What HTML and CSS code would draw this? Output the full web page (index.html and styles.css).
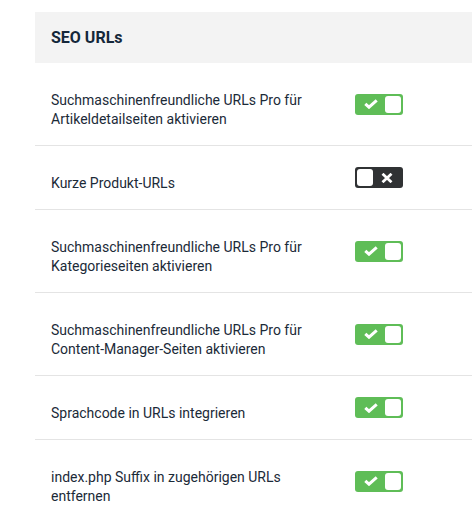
FILE: index.html
```html
<!DOCTYPE html>
<html lang="de">
<head>
<meta charset="utf-8">
<title>SEO URLs</title>
<link rel="stylesheet" href="styles.css">
</head>
<body>
<section class="panel">
  <header class="panel-head">SEO URLs</header>
  <div class="row">
    <div class="label">Suchmaschinenfreundliche URLs Pro für<br>Artikeldetailseiten aktivieren</div>
    <span class="toggle on"><svg class="ico" width="14" height="10" viewBox="0 0 14 10"><path d="M1.3 4.8 L5 8.2 L12.7 1.4" fill="none" stroke="#fff" stroke-width="3"/></svg><span class="knob"></span></span>
  </div>
  <div class="row">
    <div class="label">Kurze Produkt-URLs</div>
    <span class="toggle off"><span class="knob"></span><svg class="ico" width="12" height="10" viewBox="0 0 12 10"><path d="M1.5 0.8 L10.5 9.2 M10.5 0.8 L1.5 9.2" fill="none" stroke="#fff" stroke-width="2.8"/></svg></span>
  </div>
  <div class="row">
    <div class="label">Suchmaschinenfreundliche URLs Pro für<br>Kategorieseiten aktivieren</div>
    <span class="toggle on"><svg class="ico" width="14" height="10" viewBox="0 0 14 10"><path d="M1.3 4.8 L5 8.2 L12.7 1.4" fill="none" stroke="#fff" stroke-width="3"/></svg><span class="knob"></span></span>
  </div>
  <div class="row">
    <div class="label">Suchmaschinenfreundliche URLs Pro für<br>Content-Manager-Seiten aktivieren</div>
    <span class="toggle on"><svg class="ico" width="14" height="10" viewBox="0 0 14 10"><path d="M1.3 4.8 L5 8.2 L12.7 1.4" fill="none" stroke="#fff" stroke-width="3"/></svg><span class="knob"></span></span>
  </div>
  <div class="row">
    <div class="label">Sprachcode in URLs integrieren</div>
    <span class="toggle on"><svg class="ico" width="14" height="10" viewBox="0 0 14 10"><path d="M1.3 4.8 L5 8.2 L12.7 1.4" fill="none" stroke="#fff" stroke-width="3"/></svg><span class="knob"></span></span>
  </div>
  <div class="row">
    <div class="label">index.php Suffix in zugehörigen URLs<br>entfernen</div>
    <span class="toggle on"><svg class="ico" width="14" height="10" viewBox="0 0 14 10"><path d="M1.3 4.8 L5 8.2 L12.7 1.4" fill="none" stroke="#fff" stroke-width="3"/></svg><span class="knob"></span></span>
  </div>
</section>
</body>
</html>
```
FILE: styles.css
```css
html, body {
  margin: 0;
  padding: 0;
  background: #fff;
  overflow: hidden;
}
body {
  font-family: Roboto, "Liberation Sans", sans-serif;
  color: #1b2a38;
}
.panel {
  margin: 12px 0 0 35px;
  width: 520px;
}
.panel-head {
  background: #f3f3f3;
  height: 51px;
  box-sizing: border-box;
  padding: 0 16px;
  display: flex;
  align-items: center;
  font-size: 16px;
  font-weight: 700;
  color: #14273a;
}
.row {
  display: flex;
  align-items: center;
  border-bottom: 1px solid #e4e4e4;
}
.row:last-child {
  border-bottom: none;
}
.label {
  width: 304px;
  padding: 28px 0 16px 16px;
  font-size: 14px;
  line-height: 19px;
}
.toggle {
  width: 48px;
  height: 21px;
  border-radius: 3px;
  box-sizing: border-box;
  padding: 2px;
  display: flex;
  align-items: center;
  justify-content: space-between;
}
.toggle.on { background: #5fbd57; }
.toggle.off { background: #303234; }
.knob {
  width: 16px;
  height: 17px;
  background: #fff;
  border-radius: 3px;
}
.toggle.on .ico { margin-left: 7px; }
.toggle.off .ico { margin-right: 8px; }
```
